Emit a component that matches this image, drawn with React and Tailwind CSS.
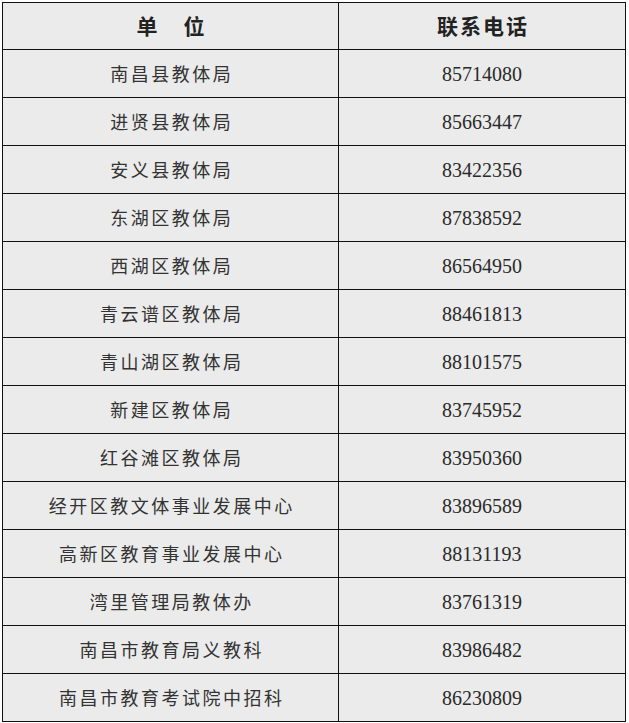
import React from "react";

const rows = [
  ["南昌县教体局", "85714080"],
  ["进贤县教体局", "85663447"],
  ["安义县教体局", "83422356"],
  ["东湖区教体局", "87838592"],
  ["西湖区教体局", "86564950"],
  ["青云谱区教体局", "88461813"],
  ["青山湖区教体局", "88101575"],
  ["新建区教体局", "83745952"],
  ["红谷滩区教体局", "83950360"],
  ["经开区教文体事业发展中心", "83896589"],
  ["高新区教育事业发展中心", "88131193"],
  ["湾里管理局教体办", "83761319"],
  ["南昌市教育局义教科", "83986482"],
  ["南昌市教育考试院中招科", "86230809"],
];

const cjk = { fontFamily: '"Noto Sans CJK SC", sans-serif' };
const num = { fontFamily: '"Liberation Serif", "Times New Roman", serif' };

const App = () => {
  return (
    <div className="min-h-screen bg-white pt-[2px] pl-[2px]">
      <div className="w-[624px] border border-[#111] bg-[#ebebeb]">
        {/* header */}
        <div className="grid grid-cols-[336px_1fr] h-[46px]">
          <div
            className="flex items-center justify-center gap-[26px] border-r border-[#111] text-[21px] font-bold text-[#222]"
            style={cjk}
          >
            <span>单</span>
            <span>位</span>
          </div>
          <div
            className="flex items-center justify-center text-[21px] font-bold tracking-[2px] pl-[2px] text-[#222]"
            style={cjk}
          >
            联系电话
          </div>
        </div>

        {rows.map(([unit, phone], i) => (
          <div
            key={i}
            className="grid grid-cols-[336px_1fr] h-[48px] border-t border-[#111]"
          >
            <div
              className="flex items-center justify-center border-r border-[#111] text-[18px] tracking-[2.5px] pl-[2.5px] text-[#333]"
              style={cjk}
            >
              {unit}
            </div>
            <div
              className="flex items-center justify-center text-[20px] text-[#2a2a2a]"
              style={num}
            >
              {phone}
            </div>
          </div>
        ))}
      </div>
    </div>
  );
};

export default App;
